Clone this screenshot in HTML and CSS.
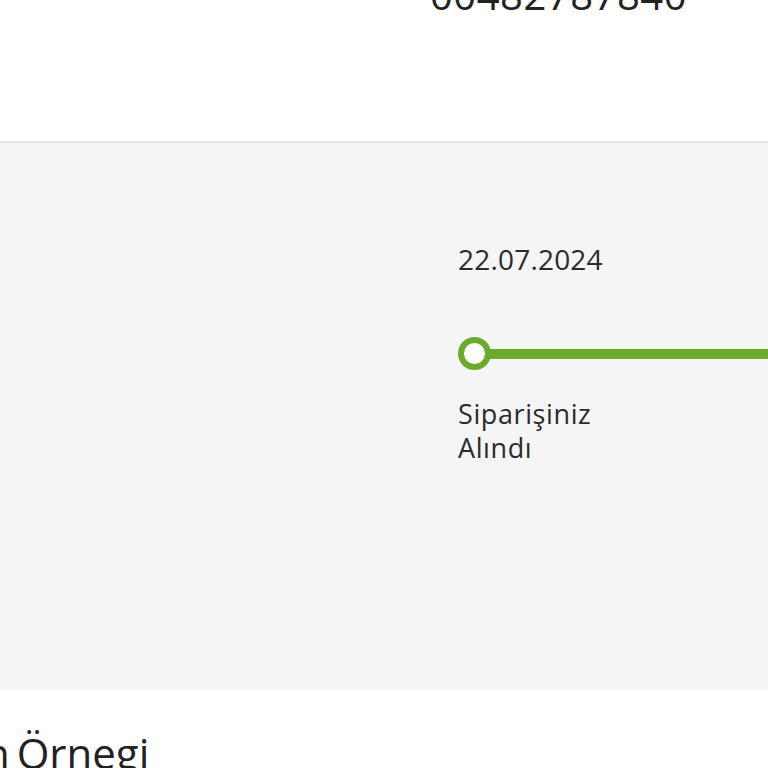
FILE: index.html
```html
<!DOCTYPE html>
<html lang="tr">
<head>
<meta charset="utf-8">
<title>Sipariş Takibi</title>
<link rel="stylesheet" href="styles.css">
</head>
<body>
  <header class="order-head">
    <div class="order-no">00482787840</div>
  </header>

  <section class="tracking">
    <div class="step">
      <div class="step-date">22.07.2024</div>
      <div class="step-track">
        <span class="step-dot"></span>
        <span class="step-line"></span>
      </div>
      <div class="step-label">Siparişiniz<br>Alındı</div>
    </div>
  </section>

  <section class="docs">
    <h2 class="docs-title">n Örnegi</h2>
  </section>
</body>
</html>
```

FILE: styles.css
```css
html, body {
  margin: 0;
  padding: 0;
  background: #ffffff;
  overflow: hidden;
}

body {
  font-family: "Open Sans", "Liberation Sans", sans-serif;
  color: #2b2b2b;
  width: 768px;
  height: 768px;
}

.order-head {
  display: flow-root;
  height: 143px;
  border-bottom: 2px solid #e4e4e4;
  box-sizing: border-box;
  padding-left: 430px;
}

.order-no {
  font-size: 40px;
  line-height: 40px;
  margin-top: -25px;
  letter-spacing: 0.5px;
  color: #222;
}

.tracking {
  background: #f5f5f5;
  height: 547px;
  box-sizing: border-box;
  padding-top: 98px;
  padding-left: 458px;
}

.step {
  display: flex;
  flex-direction: column;
}

.step-date {
  font-size: 28px;
  line-height: 36px;
  letter-spacing: 0.2px;
}

.step-track {
  display: flex;
  align-items: center;
  margin-top: 60px;
}

.step-dot {
  width: 21px;
  height: 21px;
  border: 6px solid #6aab2c;
  border-radius: 50%;
  background: #ffffff;
  flex: none;
}

.step-line {
  flex: 1;
  height: 10px;
  background: #6aab2c;
  margin-left: -2px;
}

.step-label {
  margin-top: 27px;
  font-size: 27px;
  line-height: 34px;
  letter-spacing: 0.6px;
}

.docs {
  padding-top: 33px;
}

.docs-title {
  margin: 0 0 0 -16px;
  font-weight: 400;
  font-size: 42px;
  line-height: 60px;
  word-spacing: -4px;
  color: #222;
}
```
